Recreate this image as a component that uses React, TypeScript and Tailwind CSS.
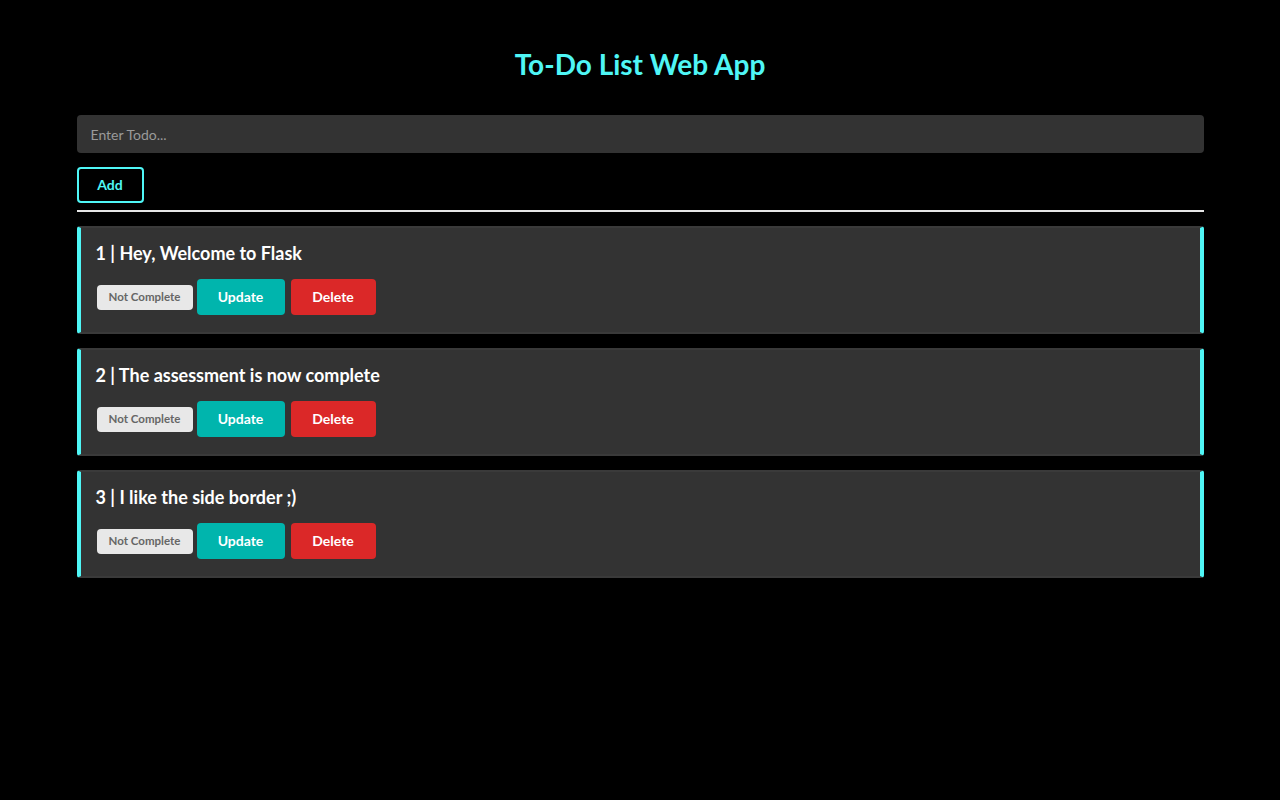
import { useState } from "react";

type Todo = { id: number; content: string; complete: boolean };

const initial: Todo[] = [
  { id: 1, content: "Hey, Welcome to Flask", complete: false },
  { id: 2, content: "The assessment is now complete", complete: false },
  { id: 3, content: "I like the side border ;)", complete: false },
];

export default function App() {
  const [todos] = useState<Todo[]>(initial);
  const [text, setText] = useState("");

  return (
    <div className="min-h-[800px] bg-black font-['Lato','Liberation_Sans',sans-serif] text-white">
      <div className="mx-auto w-[1127px] pt-[46px]">
        <h1 className="text-center text-[28px] font-bold leading-9 text-[#4ff6f6]">
          To-Do List Web App
        </h1>

        <form className="mt-[33px]" onSubmit={(e) => e.preventDefault()}>
          <input
            value={text}
            onChange={(e) => setText(e.target.value)}
            placeholder="Enter Todo..."
            className="block h-[38px] w-full rounded bg-[#333333] px-[14px] text-[14px] text-white outline-none placeholder:text-[#9a9a9a]"
          />
          <button
            type="submit"
            className="mt-[14px] h-9 w-[67px] rounded border-2 border-[#4ff6f6] pb-px text-[14px] font-bold text-[#4ff6f6]"
          >
            Add
          </button>
        </form>

        <hr className="mt-[7px] border-t-2 border-[#e6e6e6]" />

        <div className="mt-[14px] flex flex-col gap-[14px]">
          {todos.map((t) => (
            <div
              key={t.id}
              className="h-[108px] rounded-[3px] border-x-4 border-y-2 border-x-[#4ff6f6] border-y-[#3a3a3a] bg-[#333333] pl-[15px] pt-[13px]"
            >
              <p className="text-[18px] font-bold leading-6 text-white">
                {t.id} | {t.content}
              </p>
              <div className="mt-[14px] flex items-center">
                <span className="ml-px flex h-[25px] w-[96px] items-center justify-center rounded bg-[#e8e8e8] text-[11.5px] font-bold text-[#666666]">
                  {t.complete ? "Complete" : "Not Complete"}
                </span>
                <button className="ml-1 h-9 w-[88px] rounded bg-[#00b5ad] pb-px text-[14px] font-bold text-white">
                  Update
                </button>
                <button className="ml-[6px] h-9 w-[85px] rounded bg-[#db2828] pb-px text-[14px] font-bold text-white">
                  Delete
                </button>
              </div>
            </div>
          ))}
        </div>
      </div>
    </div>
  );
}
